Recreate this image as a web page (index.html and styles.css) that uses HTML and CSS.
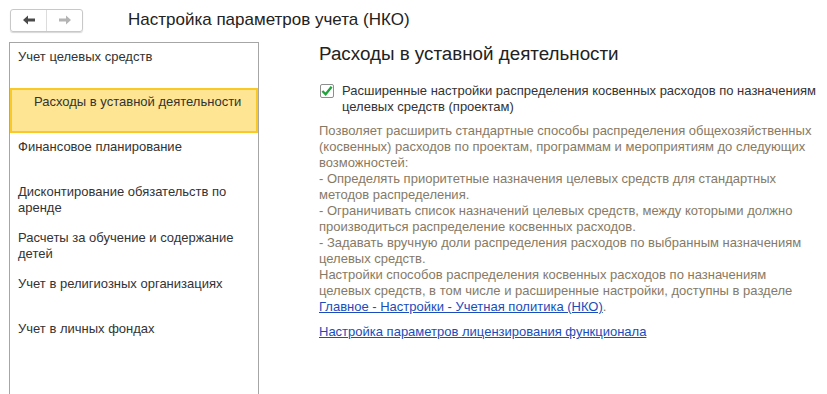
FILE: index.html
```html
<!DOCTYPE html>
<html lang="ru">
<head>
    <meta charset="UTF-8">
    <title>Настройка параметров учета (НКО)</title>
    <link rel="stylesheet" href="styles.css">
</head>
<body>

    <!-- Header -->
    <div class="header">
        <div class="nav">
            <span class="nav-btn">
                <svg width="14" height="10" viewBox="0 0 14 10"><path d="M1 5 L6 0.5 L6 3.5 L13 3.5 L13 6.5 L6 6.5 L6 9.5 Z" fill="#4a4a4a"/></svg>
            </span>
            <span class="nav-btn">
                <svg width="14" height="10" viewBox="0 0 14 10"><path d="M13 5 L8 0.5 L8 3.5 L1 3.5 L1 6.5 L8 6.5 L8 9.5 Z" fill="#b4b4b4"/></svg>
            </span>
        </div>
        <div class="title">Настройка параметров учета (НКО)</div>
    </div>

    <div class="main">
        <!-- Sections list -->
        <div class="sections">
            <div class="item">Учет целевых средств</div>
            <div class="item selected">Расходы в уставной деятельности</div>
            <div class="item">Финансовое планирование</div>
            <div class="item">Дисконтирование обязательств по аренде</div>
            <div class="item">Расчеты за обучение и содержание детей</div>
            <div class="item">Учет в религиозных организациях</div>
            <div class="item">Учет в личных фондах</div>
        </div>

        <!-- Section content -->
        <div class="content">
            <h2>Расходы в уставной деятельности</h2>
            <label class="check">
                <span class="box">
                    <svg width="13" height="12" viewBox="0 0 13 12"><path d="M1.5 6 L5 9.5 L11.5 1.5" stroke="#1fa33a" stroke-width="2.6" fill="none"/></svg>
                </span>
                <span>Расширенные настройки распределения косвенных расходов по назначениям целевых средств (проектам)</span>
            </label>
            <div class="note">
                Позволяет расширить стандартные способы распределения общехозяйственных (косвенных) расходов по проектам, программам и мероприятиям до следующих возможностей:<br>
                - Определять приоритетные назначения целевых средств для стандартных методов распределения.<br>
                - Ограничивать список назначений целевых средств, между которыми должно производиться распределение косвенных расходов.<br>
                - Задавать вручную доли распределения расходов по выбранным назначениям целевых средств.<br>
                Настройки способов распределения косвенных расходов по назначениям целевых средств, в том числе и расширенные настройки, доступны в разделе <a href="#">Главное - Настройки - Учетная политика (НКО)</a>.
            </div>
            <a class="license" href="#">Настройка параметров лицензирования функционала</a>
        </div>
    </div>

</body>
</html>
```

FILE: styles.css
```css
body {
    margin: 0;
    font-family: Arial, "Liberation Sans", sans-serif;
    font-size: 13px;
    color: #333;
    background: #fff;
}
.header {
    display: flex;
    align-items: center;
    height: 42px;
    padding-left: 10px;
}
.nav {
    display: flex;
    border: 1px solid #c8c8c8;
    border-radius: 3px;
    box-shadow: 0 1px 1px #d8d8d8;
    margin-top: -2px;
}
.nav-btn {
    display: flex;
    align-items: center;
    justify-content: center;
    width: 35px;
    height: 21px;
}
.nav-btn + .nav-btn {
    border-left: 1px solid #dcdcdc;
}
.title {
    margin-left: 45px;
    margin-top: -3px;
    font-size: 17px;
    color: #222;
}
.main {
    display: flex;
}
.sections {
    width: 248px;
    height: 360px;
    margin-left: 9px;
    border: 1px solid #a6a6a6;
    border-bottom: none;
}
.item {
    box-sizing: border-box;
    min-height: 45px;
    padding: 6px 8px 8px 8px;
    line-height: 16px;
}
.item.selected {
    background: #fde593;
    border: 2px solid #f8c927;
    padding: 4px 8px 6px 22px;
}
.content {
    width: 500px;
    margin-left: 60px;
}
h2 {
    margin: 1px 0 18px 0;
    font-size: 18.8px;
    font-weight: normal;
    color: #222;
}
.check {
    display: flex;
    line-height: 16px;
    margin-left: 1px;
}
.box {
    flex: none;
    display: flex;
    align-items: center;
    justify-content: center;
    width: 12px;
    height: 12px;
    margin-top: 1px;
    margin-right: 8px;
    border: 1px solid #8e8e8e;
    border-radius: 2px;
}
.note {
    margin-top: 8px;
    line-height: 16px;
    color: #867a66;
}
.note a, .license {
    color: #1a4dbb;
}
.license {
    display: inline-block;
    margin-top: 9px;
    line-height: 16px;
}
```
